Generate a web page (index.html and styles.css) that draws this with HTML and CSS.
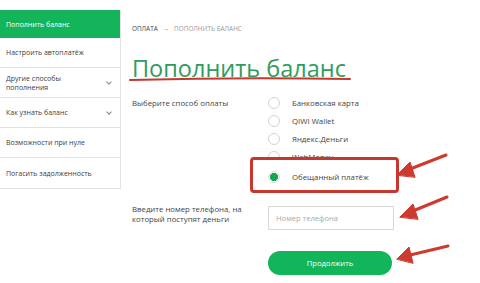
FILE: index.html
```html
<!DOCTYPE html>
<html lang="ru">
<head>
<meta charset="utf-8">
<link rel="stylesheet" href="styles.css">
</head>
<body>
<div class="page">
  <nav class="sidebar">
    <div class="item active">Пополнить баланс</div>
    <div class="item">Настроить автоплатёж</div>
    <div class="item two">Другие способы<br>пополнения<span class="chev"></span></div>
    <div class="item">Как узнать баланс<span class="chev"></span></div>
    <div class="item">Возможности при нуле</div>
    <div class="item">Погасить задолженность</div>
  </nav>
  <main class="main">
    <div class="crumbs"><span class="crumb-first">Оплата</span><span class="crumb-arrow">→</span><span>Пополнить баланс</span></div>
    <h1 class="title">Пополнить баланс</h1>
    <div class="row pay">
      <div class="label">Выберите способ оплаты</div>
      <div class="options">
        <div class="opt"><span class="radio"></span>Банковская карта</div>
        <div class="opt"><span class="radio"></span>QIWI Wallet</div>
        <div class="opt"><span class="radio"></span>Яндекс.Деньги</div>
        <div class="opt"><span class="radio"></span>WebMoney</div>
        <div class="opt marked"><span class="radio on"></span>Обещанный платёж</div>
      </div>
    </div>
    <div class="row phone">
      <div class="label">Введите номер телефона, на<br>который поступят деньги</div>
      <div class="input">Номер телефона</div>
    </div>
    <div class="row submit">
      <div class="label"></div>
      <div class="btn">Продолжить</div>
    </div>
  </main>
  <svg class="marks" width="480" height="283" viewBox="0 0 480 283">
    <path d="M130 80 Q240 77 350 79" stroke="#c8362d" stroke-width="2" fill="none" stroke-linecap="round"/>
    <g stroke="#cf3a2e" stroke-width="3" fill="#cf3a2e" stroke-linecap="round">
      <line x1="446" y1="155" x2="405" y2="171"/>
      <polygon points="397,175 410,162 415,177" stroke-width="1"/>
      <line x1="447" y1="197" x2="408" y2="213"/>
      <polygon points="400,217 413,204 418,219" stroke-width="1"/>
      <line x1="448" y1="246" x2="406" y2="256"/>
      <polygon points="397,259 409,247 413,263" stroke-width="1"/>
    </g>
  </svg>
</div>
</body>
</html>
```
FILE: styles.css
```css
* { box-sizing: border-box; }
html, body { margin: 0; padding: 0; background: #fff; }
body {
  font-family: "Open Sans", "Noto Sans", sans-serif;
  color: #333;
  width: 480px;
  height: 283px;
  overflow: hidden;
}
.page {
  position: relative;
  display: flex;
  width: 480px;
  height: 283px;
}
.sidebar {
  width: 121px;
  margin-top: 10px;
  align-self: flex-start;
  border-right: 1px solid #e3e3e3;
  border-bottom: 1px solid #e3e3e3;
  flex-shrink: 0;
}
.item {
  position: relative;
  height: 30px;
  display: flex;
  align-items: center;
  padding-left: 6px;
  font-size: 7px;
  line-height: 9px;
  color: #3d3d3d;
  border-bottom: 1px solid #e3e3e3;
}
.item:last-child { border-bottom: none; }
.item.active {
  height: 28px;
  background: #14b45a;
  color: #fff;
  border-bottom: none;
}
.chev {
  position: absolute;
  right: 9px;
  top: 50%;
  width: 4px;
  height: 4px;
  margin-top: -3px;
  border-right: 1px solid #888;
  border-bottom: 1px solid #888;
  transform: rotate(45deg);
}
.main {
  flex: 1;
  padding-left: 11px;
  padding-top: 25px;
}
.crumbs {
  font-size: 6.4px;
  line-height: 8px;
  text-transform: uppercase;
  color: #999;
  display: flex;
  gap: 5px;
}
.crumb-first { color: #444; }
.crumb-arrow { color: #777; }
.title {
  margin: 21px 0 0 0;
  font-weight: 400;
  font-size: 23.5px;
  line-height: 28px;
  color: #2f9c5e;
}
.row {
  display: flex;
}
.label {
  width: 136px;
  flex-shrink: 0;
  font-size: 7.8px;
  line-height: 10px;
  color: #444;
}
.pay { margin-top: 16px; }
.options {
  display: flex;
  flex-direction: column;
}
.opt {
  position: relative;
  display: flex;
  align-items: center;
  height: 18px;
  font-size: 7.8px;
  color: #444;
}
.opt:first-child { margin-top: -4px; }
.radio {
  width: 12px;
  height: 12px;
  border-radius: 50%;
  border: 1px solid #d3d3d3;
  margin-right: 12px;
  flex-shrink: 0;
  background: #fff;
}
.radio.on {
  border-color: #d9d9d9;
  background: radial-gradient(circle, #12a656 0 3.8px, #fff 4.4px);
}
.opt.marked {
  z-index: 1;
  margin-top: 2px;
}
.opt.marked::before {
  content: "";
  position: absolute;
  z-index: -1;
  left: -18px;
  right: -30px;
  top: -11px;
  bottom: -7px;
  background: #fff;
  border: 3px solid #c8362d;
  border-radius: 4px;
}
.phone {
  margin-top: 20px;
  align-items: flex-start;
}
.phone .label { margin-top: -2px; }
.input {
  width: 126px;
  height: 24px;
  border: 1px solid #d8d8d8;
  font-size: 7.6px;
  color: #aaa;
  padding-left: 7px;
  display: flex;
  align-items: center;
}
.submit { margin-top: 21px; }
.btn {
  width: 124px;
  height: 24px;
  border-radius: 12px;
  background: #13b55a;
  color: #fff;
  font-size: 7.6px;
  display: flex;
  align-items: center;
  justify-content: center;
}
.marks {
  position: absolute;
  left: 0;
  top: 0;
  pointer-events: none;
}
```
